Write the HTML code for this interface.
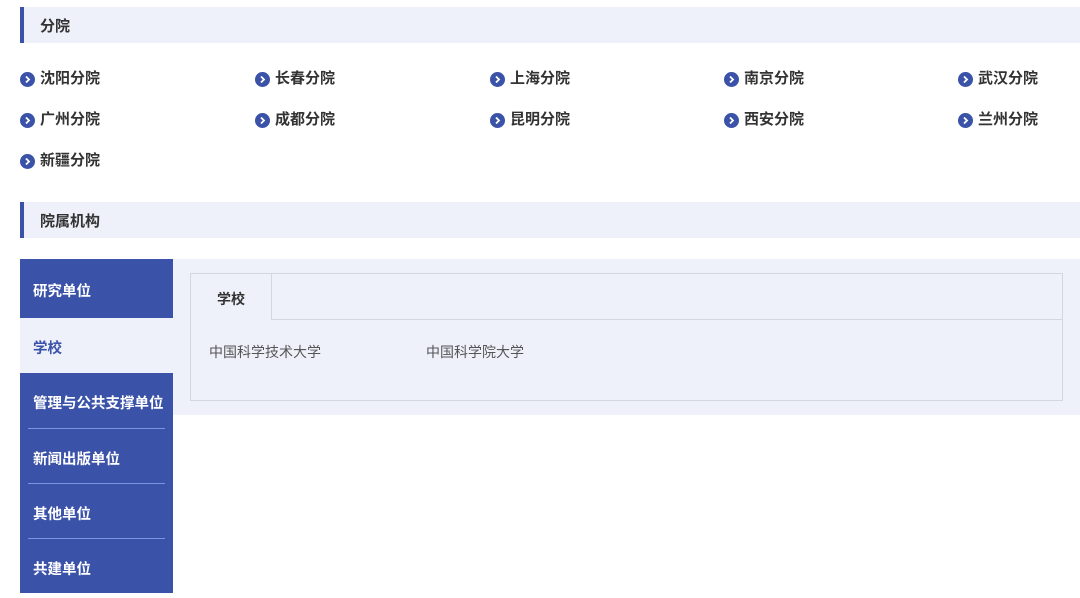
<!DOCTYPE html>
<html><head><meta charset="utf-8"><style>
*{margin:0;padding:0;box-sizing:border-box}
body{width:1080px;height:593px;background:#fff;font-family:"Liberation Sans","Noto Sans CJK SC",sans-serif;position:relative;overflow:hidden;color:#333}
.hd{position:absolute;left:20px;width:1060px;height:36px;background:#eff1fa;border-left:4px solid #3a52a8;font-size:15px;font-weight:bold;line-height:36px;padding-left:16px;padding-top:4px}
.it{position:absolute;font-size:15px;font-weight:bold;line-height:20px;display:flex;align-items:center}
.it svg{margin-right:5px}
.side{position:absolute;left:20px;top:259px;width:153px;height:334px;background:#3a52a8}
.si{position:absolute;left:0;width:153px;height:55px;color:#fff;font-size:14.5px;font-weight:bold;line-height:55px;padding-left:13px;padding-top:4px}
.sep{position:absolute;left:8px;width:137px;height:1px;background:#7d95e0}
.panel{position:absolute;left:173px;top:259px;width:907px;height:156px;background:#eff1fa}
.box{position:absolute;left:17px;top:14px;width:873px;height:128px;border:1px solid #d3d7e3}
.tabrow{position:absolute;left:0;top:0;width:871px;height:46px;border-bottom:1px solid #d3d7e3}
.tab{position:absolute;left:0;top:0;width:81px;height:46px;border-right:1px solid #d3d7e3;background:#eff1fa;font-size:14px;font-weight:bold;line-height:46px;text-align:center}
.c{position:absolute;top:67px;font-size:14px;color:#555}
</style></head><body>
<div class="hd" style="top:7px;line-height:32px">分院</div>
<div class="hd" style="top:202px;line-height:32px">院属机构</div>
<svg width="0" height="0" style="position:absolute"><defs><g id="ic"><circle cx="7.5" cy="7.5" r="7.5" fill="#3a52a8"/><path d="M6 4.5l3 3-3 3" stroke="#fff" stroke-width="1.8" fill="none"/></g></defs></svg>
<div class="it" style="left:20px;top:69px"><svg width="15" height="15"><use href="#ic"/></svg>沈阳分院</div>
<div class="it" style="left:255px;top:69px"><svg width="15" height="15"><use href="#ic"/></svg>长春分院</div>
<div class="it" style="left:490px;top:69px"><svg width="15" height="15"><use href="#ic"/></svg>上海分院</div>
<div class="it" style="left:724px;top:69px"><svg width="15" height="15"><use href="#ic"/></svg>南京分院</div>
<div class="it" style="left:958px;top:69px"><svg width="15" height="15"><use href="#ic"/></svg>武汉分院</div>
<div class="it" style="left:20px;top:110px"><svg width="15" height="15"><use href="#ic"/></svg>广州分院</div>
<div class="it" style="left:255px;top:110px"><svg width="15" height="15"><use href="#ic"/></svg>成都分院</div>
<div class="it" style="left:490px;top:110px"><svg width="15" height="15"><use href="#ic"/></svg>昆明分院</div>
<div class="it" style="left:724px;top:110px"><svg width="15" height="15"><use href="#ic"/></svg>西安分院</div>
<div class="it" style="left:958px;top:110px"><svg width="15" height="15"><use href="#ic"/></svg>兰州分院</div>
<div class="it" style="left:20px;top:151px"><svg width="15" height="15"><use href="#ic"/></svg>新疆分院</div>
<div class="side">
<div class="si" style="top:0px;height:59px;line-height:59px">研究单位</div>
<div class="si" style="top:59px;background:#eff1fa;color:#3a52a8">学校</div>
<div class="si" style="top:114px">管理与公共支撑单位</div>
<div class="sep" style="top:169px"></div>
<div class="si" style="top:170px">新闻出版单位</div>
<div class="sep" style="top:224px"></div>
<div class="si" style="top:225px">其他单位</div>
<div class="sep" style="top:279px"></div>
<div class="si" style="top:280px">共建单位</div>
</div>
<div class="panel"><div class="box">
<div class="tabrow"></div><div class="tab" style="padding-top:2px">学校</div>
<div class="c" style="left:18px;top:68px">中国科学技术大学</div>
<div class="c" style="left:235px;top:68px">中国科学院大学</div>
</div></div>
</body></html>
